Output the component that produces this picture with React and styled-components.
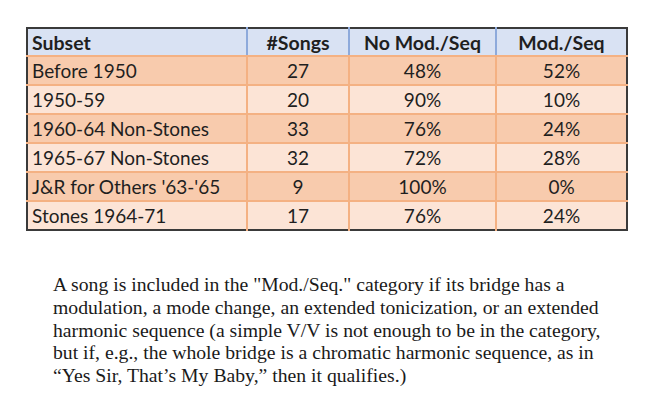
import React from "react";
import styled, { createGlobalStyle } from "styled-components";

const GlobalStyle = createGlobalStyle`
    body {
        margin: 0;
        background: #ffffff;
    }
`;

const Page = styled.div`
    width: 650px;
    height: 416px;
    padding: 27px 0 0 26px;
    box-sizing: border-box;
`;

const Table = styled.table`
    border-collapse: collapse;
    border: 2px solid #3a3a3a;
    font-family: Lato, "Open Sans", sans-serif;
    font-size: 19px;
    color: #1f1f1f;
    table-layout: fixed;
    width: 600px;
`;

const HeadCell = styled.th`
    background: #d9e2f3;
    font-weight: 700;
    font-size: 19.5px;
    height: 26px;
    padding: 0 4px;
    text-align: ${(props) => (props.left ? "left" : "center")};
    border-left: 2px solid #8eaadb;
    border-bottom: 2px solid #f4b183;
    &:first-child {
        border-left: none;
    }
`;

const Cell = styled.td`
    background: ${(props) => (props.dark ? "#f8cbad" : "#fce4d6")};
    height: 27px;
    padding: 0 4px;
    text-align: ${(props) => (props.left ? "left" : "center")};
    border-left: 2px solid #f4b183;
    border-top: 2px solid #f4b183;
    &:first-child {
        border-left: none;
    }
`;

const Note = styled.div`
    margin: 42px 0 0 27px;
    font-family: "Liberation Serif", "Times New Roman", serif;
    font-size: 19.7px;
    line-height: 22.8px;
    color: #1a1a1a;
`;

const Line = styled.div`
    white-space: nowrap;
`;

const rows = [
    ["Before 1950", "27", "48%", "52%"],
    ["1950-59", "20", "90%", "10%"],
    ["1960-64 Non-Stones", "33", "76%", "24%"],
    ["1965-67 Non-Stones", "32", "72%", "28%"],
    ["J&R for Others '63-'65", "9", "100%", "0%"],
    ["Stones 1964-71", "17", "76%", "24%"],
];

const noteLines = [
    "A song is included in the \"Mod./Seq.\" category if its bridge has a",
    "modulation, a mode change, an extended tonicization, or an extended",
    "harmonic sequence (a simple V/V is not enough to be in the category,",
    "but if, e.g., the whole bridge is a chromatic harmonic sequence, as in",
    "“Yes Sir, That’s My Baby,” then it qualifies.)",
];

const App = () => {
    return (
        <>
            <GlobalStyle />
            <Page>
                <Table>
                    <colgroup>
                        <col style={{ width: 220 }} />
                        <col style={{ width: 102 }} />
                        <col style={{ width: 147 }} />
                        <col style={{ width: 131 }} />
                    </colgroup>
                    <thead>
                        <tr>
                            <HeadCell left>Subset</HeadCell>
                            <HeadCell>#Songs</HeadCell>
                            <HeadCell>No Mod./Seq</HeadCell>
                            <HeadCell>Mod./Seq</HeadCell>
                        </tr>
                    </thead>
                    <tbody>
                        {rows.map((row, i) => (
                            <tr key={row[0]}>
                                {row.map((value, j) => (
                                    <Cell key={j} dark={i % 2 === 0} left={j === 0}>
                                        {value}
                                    </Cell>
                                ))}
                            </tr>
                        ))}
                    </tbody>
                </Table>
                <Note>
                    {noteLines.map((line) => (
                        <Line key={line}>{line}</Line>
                    ))}
                </Note>
            </Page>
        </>
    );
};

export default App;
